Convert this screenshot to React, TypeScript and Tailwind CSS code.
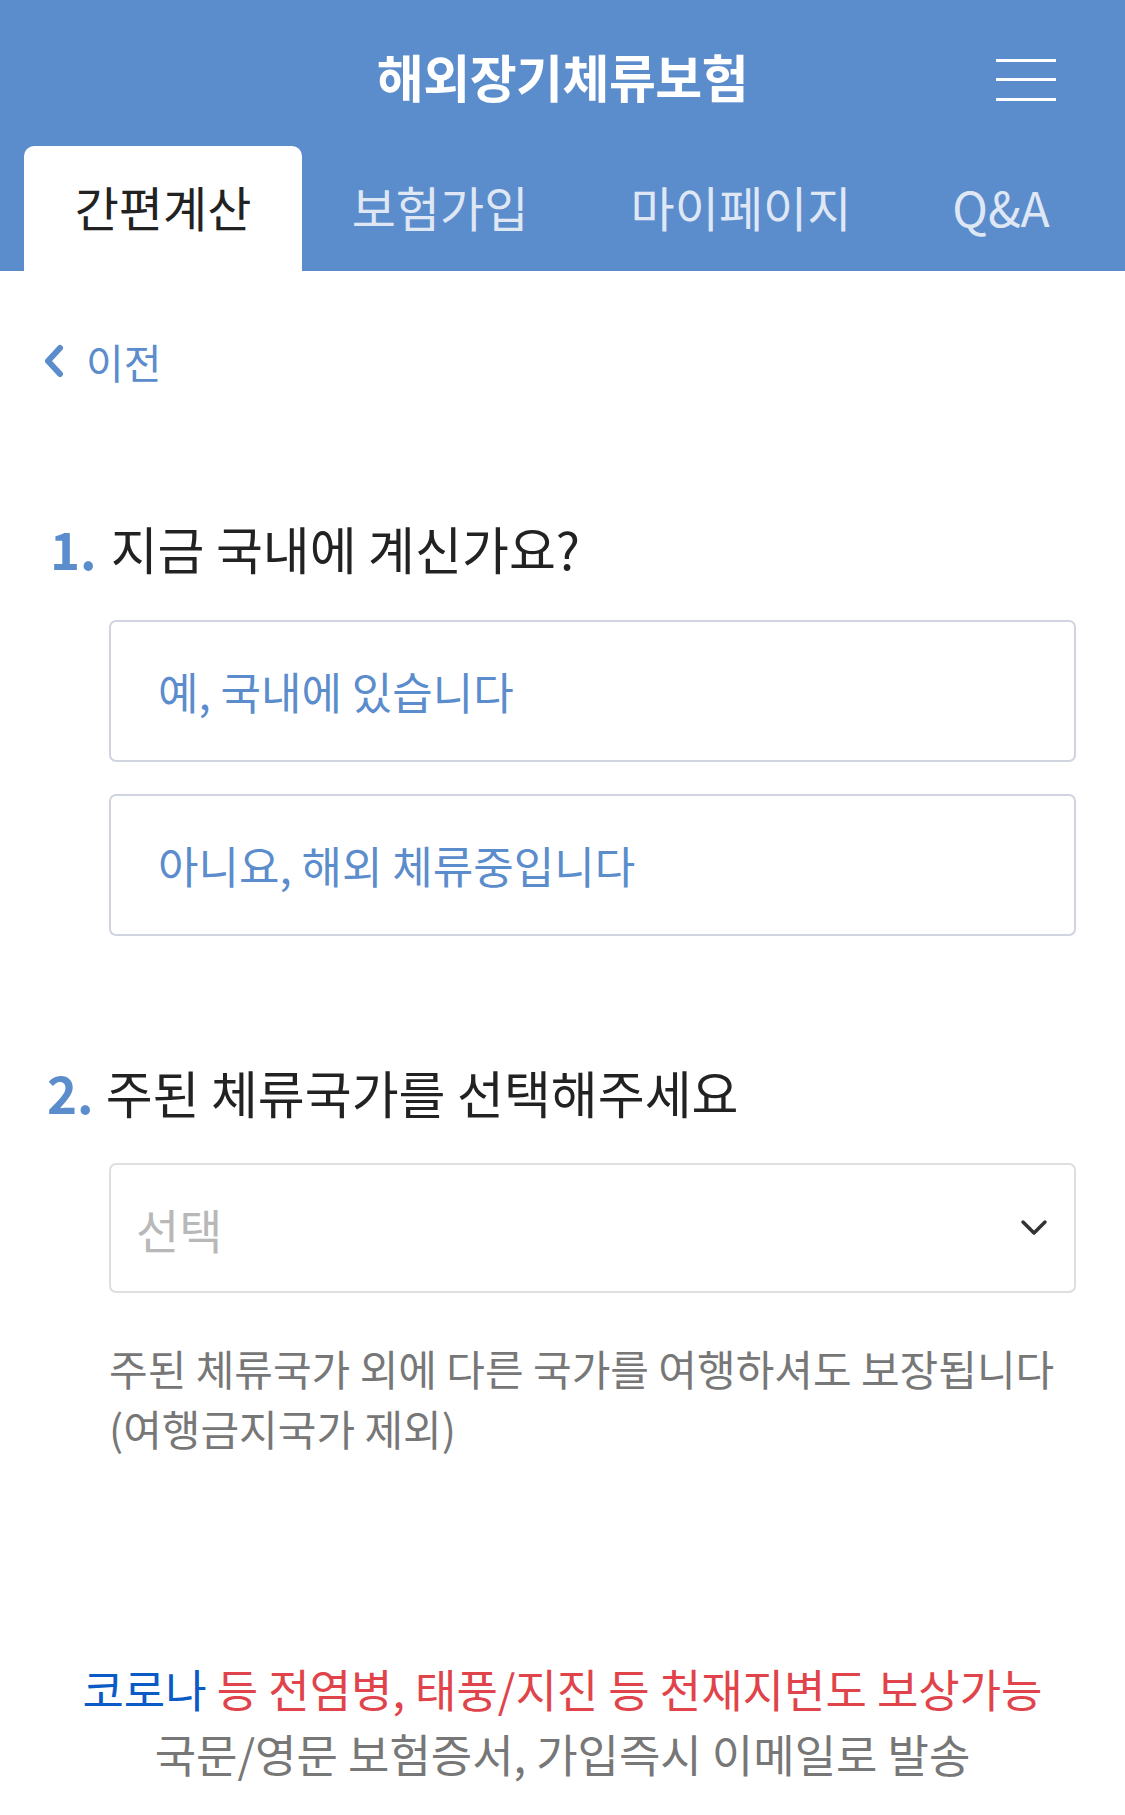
import React, { useState } from 'react';

const tabs = [
    { label: '간편계산', w: 'w-[278px]' },
    { label: '보험가입', w: 'w-[276px]' },
    { label: '마이페이지', w: 'w-[326px]' },
    { label: 'Q&A', w: 'w-[194px]' },
];

const App: React.FC = () => {
    const [active, setActive] = useState(0);
    const [inKorea, setInKorea] = useState<boolean | null>(null);

    return (
        <div className="min-h-[1815px] bg-white font-['Noto_Sans_CJK_KR','Noto_Sans',sans-serif]">
            {/* 상단 헤더 */}
            <header className="bg-[#5b8ccc]">
                <div className="grid h-[146px] grid-cols-[1fr_auto_1fr] items-center pt-[6px]">
                    <div />
                    <h1 className="text-[51px] font-bold leading-none tracking-[-0.5px] text-white">해외장기체류보험</h1>
                    <div className="flex justify-end pr-[69px]">
                        <button className="mt-[7px] flex h-[42px] w-[60px] flex-col justify-between" aria-label="menu">
                            <span className="h-[3px] w-full bg-white" />
                            <span className="h-[3px] w-full bg-white" />
                            <span className="h-[3px] w-full bg-white" />
                        </button>
                    </div>
                </div>
                <nav className="flex h-[125px] pl-[24px]">
                    {tabs.map((t, i) => (
                        <button
                            key={t.label}
                            onClick={() => setActive(i)}
                            className={
                                i === active
                                    ? `${t.w} flex items-center justify-center rounded-t-[10px] bg-white pb-[6px] text-[48px] leading-none text-[#222]`
                                    : `${t.w} flex items-center justify-center pb-[6px] text-[48px] leading-none text-[#dfe7f4]`
                            }
                        >
                            {t.label}
                        </button>
                    ))}
                </nav>
            </header>

            <main>
                {/* 이전 */}
                <div className="mt-[66px] flex h-[48px] items-center pl-[42px]">
                    <svg width="24" height="34" viewBox="0 0 24 34" className="mr-[20px]">
                        <polyline points="18,4 6,17 18,30" fill="none" stroke="#5b8ccc" strokeWidth="6" strokeLinecap="round" strokeLinejoin="round" />
                    </svg>
                    <span className="text-[41px] leading-none text-[#5b8ccc]">이전</span>
                </div>

                {/* 1번 질문 */}
                <h2 className="mt-[135px] flex h-[56px] items-center pl-[50px] text-[51px] leading-none text-[#222]">
                    <span className="mr-[14px] font-bold text-[#5b8ccc]">1.</span>
                    지금 국내에 계신가요?
                </h2>
                <div className="ml-[109px] mr-[49px] mt-[44px] flex flex-col gap-[32px]">
                    <button
                        onClick={() => setInKorea(true)}
                        className={`flex h-[142px] items-center rounded-[7px] border-2 pl-[47px] text-[44px] leading-none text-[#5b8ccc] ${inKorea === true ? 'border-[#5b8ccc]' : 'border-[#d0d4de]'}`}
                    >
                        예, 국내에 있습니다
                    </button>
                    <button
                        onClick={() => setInKorea(false)}
                        className={`flex h-[142px] items-center rounded-[7px] border-2 pl-[47px] text-[44px] leading-none text-[#5b8ccc] ${inKorea === false ? 'border-[#5b8ccc]' : 'border-[#d0d4de]'}`}
                    >
                        아니요, 해외 체류중입니다
                    </button>
                </div>

                {/* 2번 질문 */}
                <h2 className="mt-[128px] flex h-[56px] items-center pl-[47px] text-[51px] leading-none text-[#222]">
                    <span className="mr-[12px] font-bold text-[#5b8ccc]">2.</span>
                    주된 체류국가를 선택해주세요
                </h2>
                <div className="ml-[109px] mr-[49px] mt-[43px]">
                    <div className="flex h-[130px] items-center justify-between rounded-[7px] border-2 border-[#dedede] pl-[25px] pr-[26px]">
                        <span className="text-[47px] leading-none text-[#b8b8b8]">선택</span>
                        <svg width="28" height="18" viewBox="0 0 28 18">
                            <polyline points="3,3 14,14 25,3" fill="none" stroke="#333" strokeWidth="3.5" strokeLinecap="round" strokeLinejoin="round" />
                        </svg>
                    </div>
                    <p className="mt-[45px] text-[42px] leading-[60px] text-[#777]">
                        주된 체류국가 외에 다른 국가를 여행하셔도 보장됩니다
                        <br />
                        (여행금지국가 제외)
                    </p>
                </div>

                {/* 하단 안내 */}
                <div className="mt-[198px] text-center text-[45px] leading-[65px]">
                    <p>
                        <span className="text-[#0a5bc6]">코로나</span>
                        <span className="text-[#e0444a]"> 등 전염병, 태풍/지진 등 천재지변도 보상가능</span>
                    </p>
                    <p className="text-[#777]">국문/영문 보험증서, 가입즉시 이메일로 발송</p>
                </div>
            </main>
        </div>
    );
};

export default App;
